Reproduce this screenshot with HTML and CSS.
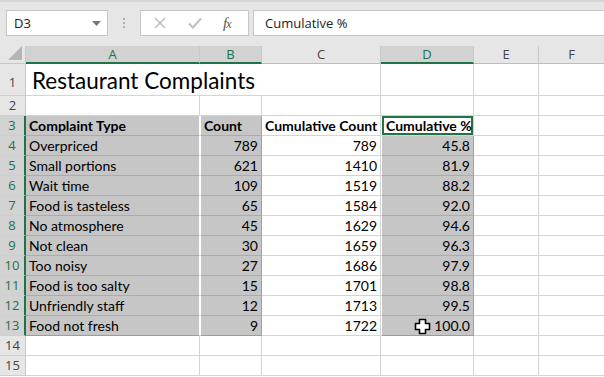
FILE: index.html
```html
<!DOCTYPE html>
<html>
<head>
<meta charset="utf-8">
<link rel="stylesheet" href="styles.css">
</head>
<body>
<div class="app">
  <div class="toolbar">
    <div class="namebox">
      <span class="nb-text">D3</span>
      <svg class="nb-arrow" width="9" height="5" viewBox="0 0 9 5"><path d="M0 0h9L4.5 5z" fill="#777"/></svg>
    </div>
    <div class="dots"><span></span><span></span><span></span></div>
    <div class="fbuttons">
      <svg class="fb-icon" width="12" height="12" viewBox="0 0 12 12"><path d="M1 1L11 11M11 1L1 11" stroke="#b8b8b8" stroke-width="1.4" fill="none"/></svg>
      <svg class="fb-icon" width="14" height="12" viewBox="0 0 14 12"><path d="M1 6.5L5 10.5L13 1.5" stroke="#c2c2c2" stroke-width="2.2" fill="none"/></svg>
      <span class="fx">f<span class="fx-x">x</span></span>
    </div>
    <div class="finput">Cumulative %</div>
  </div>
  <div class="sheet">
    <div class="corner"><svg width="14" height="14" viewBox="0 0 14 14"><path d="M14 0V14H0z" fill="#b5b5b5"/></svg></div>
    <div class="ch sel">A</div>
    <div class="ch sel">B</div>
    <div class="ch">C</div>
    <div class="ch sel">D</div>
    <div class="ch">E</div>
    <div class="ch last">F</div>

    <div class="rh tall">1</div>
    <div class="c title span2">Restaurant Complaints</div>
    <div class="c"></div><div class="c"></div><div class="c"></div><div class="c last"></div>

    <div class="rh">2</div>
    <div class="c"></div><div class="c"></div><div class="c"></div><div class="c"></div><div class="c"></div><div class="c last"></div>

    <div class="rh rsel">3</div>
    <div class="c sa b">Complaint Type</div>
    <div class="c sb b">Count</div>
    <div class="c b">Cumulative Count</div>
    <div class="c active b">Cumulative %</div>
    <div class="c"></div><div class="c last"></div>

    <div class="rh rsel">4</div>
    <div class="c sa">Overpriced</div><div class="c sb r">789</div><div class="c r">789</div><div class="c sd r">45.8</div><div class="c"></div><div class="c last"></div>
    <div class="rh rsel">5</div>
    <div class="c sa">Small portions</div><div class="c sb r">621</div><div class="c r">1410</div><div class="c sd r">81.9</div><div class="c"></div><div class="c last"></div>
    <div class="rh rsel">6</div>
    <div class="c sa">Wait time</div><div class="c sb r">109</div><div class="c r">1519</div><div class="c sd r">88.2</div><div class="c"></div><div class="c last"></div>
    <div class="rh rsel">7</div>
    <div class="c sa">Food is tasteless</div><div class="c sb r">65</div><div class="c r">1584</div><div class="c sd r">92.0</div><div class="c"></div><div class="c last"></div>
    <div class="rh rsel">8</div>
    <div class="c sa">No atmosphere</div><div class="c sb r">45</div><div class="c r">1629</div><div class="c sd r">94.6</div><div class="c"></div><div class="c last"></div>
    <div class="rh rsel">9</div>
    <div class="c sa">Not clean</div><div class="c sb r">30</div><div class="c r">1659</div><div class="c sd r">96.3</div><div class="c"></div><div class="c last"></div>
    <div class="rh rsel">10</div>
    <div class="c sa">Too noisy</div><div class="c sb r">27</div><div class="c r">1686</div><div class="c sd r">97.9</div><div class="c"></div><div class="c last"></div>
    <div class="rh rsel">11</div>
    <div class="c sa">Food is too salty</div><div class="c sb r">15</div><div class="c r">1701</div><div class="c sd r">98.8</div><div class="c"></div><div class="c last"></div>
    <div class="rh rsel">12</div>
    <div class="c sa">Unfriendly staff</div><div class="c sb r">12</div><div class="c r">1713</div><div class="c sd r">99.5</div><div class="c"></div><div class="c last"></div>
    <div class="rh rsel">13</div>
    <div class="c sa endrow">Food not fresh</div><div class="c sb r endrow">9</div><div class="c r">1722</div>
    <div class="c sd r endrow cursorcell">100.0
      <svg class="cursor" width="17" height="17" viewBox="0 0 17 17"><path d="M5.5 1.5h6v4h4v6h-4v4h-6v-4h-4v-6h4z" fill="#fff" stroke="#000" stroke-width="1.6" stroke-linejoin="round"/></svg>
    </div>
    <div class="c"></div><div class="c last"></div>

    <div class="rh">14</div>
    <div class="c"></div><div class="c"></div><div class="c"></div><div class="c"></div><div class="c"></div><div class="c last"></div>
    <div class="rh">15</div>
    <div class="c"></div><div class="c"></div><div class="c"></div><div class="c"></div><div class="c"></div><div class="c last"></div>
  </div>
</div>
</body>
</html>
```
FILE: styles.css
```css
* { box-sizing: border-box; }
html, body { margin: 0; padding: 0; background: #fff; }
.app { width: 604px; height: 377px; overflow: hidden; font-family: "Open Sans", sans-serif; }

.toolbar {
  height: 46px;
  background: #e6e6e6;
  border-top: 2px solid #d6d6d6;
  display: flex;
  align-items: flex-start;
  padding-top: 8px;
  padding-left: 6px;
}
.namebox {
  width: 102px; height: 26px;
  background: #fff;
  border: 1px solid #c6c6c6;
  display: flex; align-items: center; justify-content: space-between;
  padding: 0 6px 0 7px;
  font-size: 13px; color: #222;
}
.nb-arrow { margin-top: 1px; }
.dots {
  width: 32px; height: 26px;
  display: flex; flex-direction: column; align-items: center; justify-content: center; gap: 2px;
}
.dots span { width: 2px; height: 2px; background: #b0b0b0; display: block; }
.fbuttons {
  width: 109px; height: 26px;
  background: #fff;
  border: 1px solid #c6c6c6;
  display: flex; align-items: center;
  padding-left: 13px;
  gap: 0;
}
.fbuttons .fb-icon:first-child { margin-right: 22px; }
.fbuttons .fb-icon:nth-child(2) { margin-right: 21px; }
.fx { font-family: "Liberation Serif", serif; font-style: italic; font-size: 15px; color: #555; letter-spacing: -1px; }
.fx-x { font-size: 12px; }
.finput {
  margin-left: 4px;
  flex: 1; height: 26px;
  background: #fff;
  border: 1px solid #c6c6c6;
  border-right: none;
  font-size: 13px; color: #222;
  padding-left: 11px;
  line-height: 24px;
}

.sheet {
  display: grid;
  grid-template-columns: 26px 174px 62px 119px 93px 65px 65px;
  grid-template-rows: 18px 32px repeat(14, 20px);
  background: #fff;
}
.corner {
  background: #e6e6e6;
  border-right: 1px solid #c8c8c8;
  border-bottom: 1px solid #c8c8c8;
  display: flex; align-items: flex-end; justify-content: flex-end;
  padding: 0 3px 3px 0;
}
.ch {
  background: #e6e6e6;
  border-right: 1px solid #c8c8c8;
  border-bottom: 1px solid #bdbdbd;
  font-size: 13px; color: #444;
  text-align: center; line-height: 17px;
}
.ch.sel { background: #d2d2d2; color: #217346; border-bottom: 2px solid #217346; line-height: 17px; }
.ch.last { border-right: none; }
.rh {
  background: #e6e6e6;
  border-right: 1px solid #c8c8c8;
  border-bottom: 1px solid #cfcfcf;
  font-size: 13px; color: #444;
  text-align: center; line-height: 19px;
}
.rh.tall { padding-top: 6px; line-height: 25px; }
.rh.rsel { background: #d2d2d2; color: #217346; border-right: 2px solid #217346; }

.c {
  border-right: 1px solid #d4d4d4;
  border-bottom: 1px solid #d4d4d4;
  font-family: Lato, "Open Sans", sans-serif;
  font-size: 14px; color: #000;
  line-height: 20px;
  padding: 0 3px;
  white-space: nowrap;
  position: relative;
}
.c.last { border-right: none; }
.c.b { font-weight: bold; }
.c.r { text-align: right; }
.c.title { font-size: 22.5px; line-height: 31px; padding-left: 6px; padding-top: 1px; border-right: none; }
.span2 { grid-column: span 2; }

.sa { background: #c6c6c6; border-right: 1px solid #fff; border-bottom-color: #ababab; }
.sb { background: #c6c6c6; border-left: 1px solid #fff; border-right: 1px solid #a0a0a0; border-bottom-color: #ababab; }
.sd { background: #c6c6c6; border-left: 1px solid #fff; border-right: 1px solid #a0a0a0; border-bottom-color: #ababab; }
.endrow { border-bottom-color: #9c9c9c; }
.active {
  background: #fff;
  box-shadow: inset 0 0 0 2px #217346;
  border-left: 1px solid #fff;
  padding-left: 4px;
}
.cursor { position: absolute; left: 32px; top: 2px; }
```
